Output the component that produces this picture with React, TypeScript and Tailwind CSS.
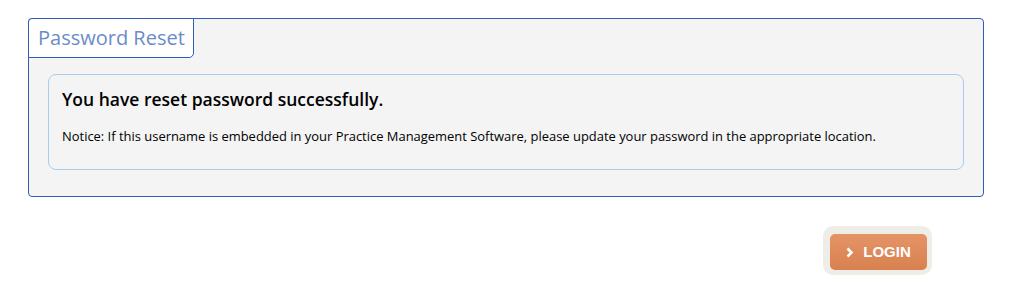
export default function App() {
  return (
    <div className="w-[1020px] h-[300px] bg-white font-['Open_Sans',sans-serif]">
      <div className="pt-[18px] pl-[28px] w-[984px]">
        {/* Password reset panel */}
        <div className="border border-[#2f5fb3] rounded-[4px] bg-[#f4f4f4] h-[179px]">
          <div className="w-[166px] h-[40px] -ml-px -mt-px border border-[#2f5fb3] rounded-tl-[4px] rounded-br-[5px] bg-white flex items-center pl-[9px]">
            <span className="text-[20px] text-[#6b8cc7] leading-none">Password Reset</span>
          </div>
          <div className="mx-[19px] mt-[16px] h-[96px] border border-[#aacdef] rounded-[8px] px-[13px] pt-[12px]">
            <h2 className="text-[17.5px] font-semibold text-black leading-[24px]">
              You have reset password successfully.
            </h2>
            <p className="mt-[16px] text-[12.95px] text-black leading-[18px]">
              Notice: If this username is embedded in your Practice Management Software, please update your password in the appropriate location.
            </p>
          </div>
        </div>

        {/* Login button */}
        <div className="flex justify-end pr-[52px] mt-[29px]">
          <div className="pt-[8px] pb-[5px] pl-[7px] pr-[5px] bg-[#efede7] rounded-[10px]">
            <button className="w-[97px] h-[36px] rounded-[5px] bg-gradient-to-b from-[#e59467] to-[#d9804f] flex items-center justify-center gap-[9px] text-white font-bold text-[15px] font-['Liberation_Sans',Arial,sans-serif]">
              <svg width="8" height="11" viewBox="0 0 8 11" className="mt-px">
                <path d="M1.5 1.5 L5.5 5.5 L1.5 9.5" fill="none" stroke="white" strokeWidth="2.6" />
              </svg>
              LOGIN
            </button>
          </div>
        </div>
      </div>
    </div>
  )
}
